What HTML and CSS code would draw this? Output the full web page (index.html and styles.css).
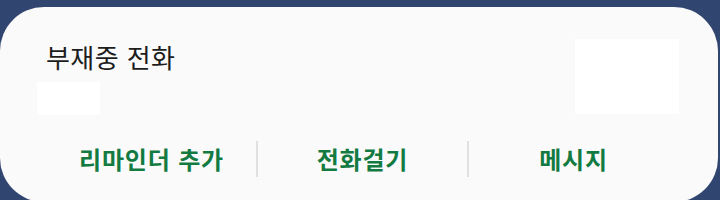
FILE: index.html
```html
<!DOCTYPE html>
<html lang="ko">
<head>
<meta charset="utf-8">
<link rel="stylesheet" href="styles.css">
</head>
<body>
<div class="card">
  <div class="top">
    <div class="left">
      <div class="title">부재중 전화</div>
      <div class="blank blank-small"></div>
    </div>
    <div class="blank blank-large"></div>
  </div>
  <div class="actions">
    <div class="action">리마인더 추가</div>
    <div class="sep"></div>
    <div class="action">전화걸기</div>
    <div class="sep"></div>
    <div class="action">메시지</div>
  </div>
</div>
</body>
</html>
```
FILE: styles.css
```css
html, body {
  margin: 0;
  padding: 0;
  width: 720px;
  height: 200px;
  overflow: hidden;
  background: #30456f;
  font-family: "Noto Sans CJK KR", "Noto Sans", sans-serif;
}
.card {
  margin-top: 7px;
  width: 718px;
  height: 195px;
  border-radius: 44px;
  background: #fafafa;
  box-sizing: border-box;
  display: flex;
  flex-direction: column;
}
.top {
  display: flex;
  justify-content: space-between;
  align-items: flex-start;
  padding: 32px 39px 0 37px;
}
.left {
  display: flex;
  flex-direction: column;
}
.title {
  margin-left: 9px;
  height: 36px;
  line-height: 36px;
  font-size: 26px;
  letter-spacing: 0.4px;
  color: #1d1d1d;
}
.blank {
  background: #ffffff;
}
.blank-small {
  margin-top: 7px;
  width: 63px;
  height: 33px;
}
.blank-large {
  width: 104px;
  height: 75px;
}
.actions {
  display: flex;
  align-items: center;
  margin-top: 26px;
  padding-left: 47px;
  height: 36px;
}
.action {
  width: 209px;
  text-align: center;
  font-size: 24px;
  font-weight: 700;
  letter-spacing: 0.8px;
  color: #137a42;
  line-height: 36px;
}
.sep {
  width: 2px;
  height: 36px;
  background: #e0e0e0;
}
```
